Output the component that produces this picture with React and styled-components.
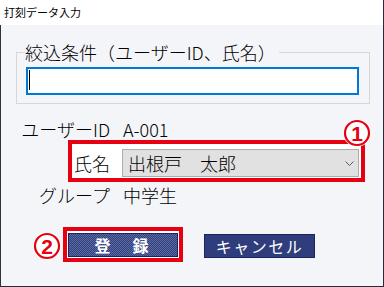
import React from "react"
import styled, { createGlobalStyle } from "styled-components"

const RED = "#e60012"

const GlobalStyle = createGlobalStyle`
  html, body {
    margin: 0;
    padding: 0;
    background: #f4f5f8;
  }
  body {
    font-family: "Noto Sans CJK JP", "Noto Sans", sans-serif;
    font-weight: 300;
    color: #000;
  }
`

const Window = styled.div`
  width: 384px;
  height: 287px;
  box-sizing: border-box;
  border-right: 1px solid #272b3b;
  border-bottom: 1px solid #272b3b;
  display: flex;
  flex-direction: column;
  overflow: hidden;
`

const TitleBar = styled.div`
  flex: none;
  height: 25px;
  background: #fff;
  padding-left: 4px;
  font-size: 11px;
  font-weight: 400;
  line-height: 25px;
`

const Body = styled.div`
  flex: 1;
  border-left: 1px solid #2b3140;
  background: #f4f5f8;
`

const GroupBox = styled.fieldset`
  box-sizing: border-box;
  width: 354px;
  margin: 15px 0 0 15px;
  padding: 3px 10px 8px 9px;
  border: 1px solid #d7d7d9;
  min-width: 0;
`

const Legend = styled.legend`
  padding: 0 3px 0 0;
  margin-left: -1px;
  font-size: 18px;
  line-height: 24px;
`

const TextBox = styled.div`
  box-sizing: border-box;
  height: 28px;
  width: 100%;
  background: #fff;
  border: 2px solid #0078d7;
  padding: 1px 0 0 1px;
  display: flex;
`

const Caret = styled.span`
  width: 1px;
  height: 20px;
  background: #000;
`

const Form = styled.div`
  margin-top: 14px;
  font-size: 18px;
`

const Row = styled.div`
  display: flex;
  align-items: center;
  height: ${p => p.$h || 22}px;
  margin-top: ${p => p.$mt || 0}px;
`

const Label = styled.span`
  flex: none;
  width: ${p => p.$w || 109}px;
  text-align: right;
  white-space: nowrap;
`

const Value = styled.span`
  margin-left: 13px;
  white-space: nowrap;
`

const Highlight = styled.div`
  position: relative;
  box-sizing: border-box;
  display: flex;
  align-items: center;
  border: 4px solid ${RED};
  background: #fff;
`

const NameHighlight = styled(Highlight)`
  width: 297px;
  margin-left: 67px;
  padding: 5px 2px 1px 0;
`

const Combo = styled.div`
  box-sizing: border-box;
  width: 237px;
  height: 28px;
  margin-left: 12px;
  border: 1px solid #adadad;
  background: #e1e1e1;
  display: flex;
  align-items: center;
  justify-content: space-between;
  padding: 0 4px 0 5px;
  line-height: 26px;
`

const Buttons = styled.div`
  display: flex;
  align-items: flex-start;
  margin-top: 20px;
`

const ButtonHighlight = styled(Highlight)`
  margin-left: 62px;
  padding: 2px 1px 1px 1px;
`

const Button = styled.div`
  box-sizing: border-box;
  width: ${p => p.$w}px;
  height: 24px;
  margin-left: ${p => p.$ml || 0}px;
  margin-top: ${p => p.$mt || 0}px;
  border: 1px solid #1b2462;
  background: ${p => p.$dither
    ? "repeating-conic-gradient(#5a69a1 0 25%, #33417d 0 50%) 0 0 / 2px 2px"
    : "#2f3d7c"};
  color: #fff;
  font-size: 16px;
  font-weight: ${p => p.$bold ? 700 : 400};
  letter-spacing: ${p => p.$ls || 0}px;
  display: flex;
  align-items: center;
  justify-content: center;
  line-height: 22px;
  white-space: nowrap;
`

const BadgeWrap = styled.div`
  position: absolute;
  width: 28px;
  height: 28px;
  top: ${p => p.$top}px;
  ${p => p.$right !== undefined ? `right: ${p.$right}px;` : `left: ${p.$left}px;`}
`

const Badge = ({ n, ...rest }) => (
  <BadgeWrap {...rest}>
    <svg width="28" height="28" viewBox="0 0 28 28">
      <circle cx="14" cy="14" r="13.8" fill="#fff" />
      <circle cx="14" cy="14" r="12" fill="#fff" stroke={RED} strokeWidth="2.2" />
      <text
        x="14"
        y="21.5"
        textAnchor="middle"
        fontSize="21"
        fontWeight="700"
        fontFamily="Liberation Sans, Arial, sans-serif"
        fill={RED}
      >
        {n}
      </text>
    </svg>
  </BadgeWrap>
)

const Chevron = () => (
  <svg width="9" height="5" viewBox="0 0 9 5">
    <path d="M0.5 0.5 L4.5 4.5 L8.5 0.5" fill="none" stroke="#5a5a5a" strokeWidth="1" />
  </svg>
)

const App = () => (
  <>
    <GlobalStyle />
    <Window>
      <TitleBar>打刻データ入力</TitleBar>
      <Body>
        <GroupBox>
          <Legend>絞込条件（ユーザーID、氏名）</Legend>
          <TextBox>
            <Caret />
          </TextBox>
        </GroupBox>
        <Form>
          <Row>
            <Label>ユーザーID</Label>
            <Value>A-001</Value>
          </Row>
          <NameHighlight>
            <Label $w={38}>氏名</Label>
            <Combo>
              <span>出根戸　太郎</span>
              <Chevron />
            </Combo>
            <Badge n="1" $right={-10} $top={-25} />
          </NameHighlight>
          <Row $h={24} $mt={1}>
            <Label>グループ</Label>
            <Value>中学生</Value>
          </Row>
        </Form>
        <Buttons>
          <ButtonHighlight>
            <Button $w={110} $dither $bold $ls={3}>登　録</Button>
            <Badge n="2" $left={-34} $top={1} />
          </ButtonHighlight>
          <Button $w={111} $ml={21} $mt={7} $ls={1.5}>キャンセル</Button>
        </Buttons>
      </Body>
    </Window>
  </>
)

export default App
